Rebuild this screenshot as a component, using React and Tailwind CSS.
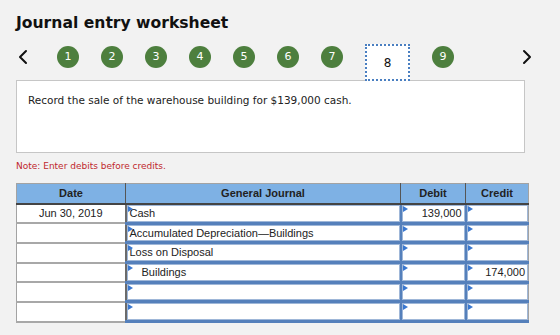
import React from "react";

const steps = [1, 2, 3, 4, 5, 6, 7, 8, 9];

const rows = [
  { date: "Jun 30, 2019", account: "Cash", debit: "139,000", credit: "" },
  { date: "", account: "Accumulated Depreciation\u2014Buildings", debit: "", credit: "" },
  { date: "", account: "Loss on Disposal", debit: "", credit: "" },
  { date: "", account: "Buildings", debit: "", credit: "174,000", indent: true },
  { date: "", account: "", debit: "", credit: "" },
  { date: "", account: "", debit: "", credit: "" },
];

const Chevron = ({ dir }) => (
  <svg width="10" height="16" viewBox="0 0 10 16" fill="none">
    <path
      d={dir === "left" ? "M8 2 L2 8 L8 14" : "M2 2 L8 8 L2 14"}
      stroke="#111"
      strokeWidth="2"
      strokeLinecap="round"
      strokeLinejoin="round"
    />
  </svg>
);

// input box with the little blue flag in the corner
const Cell = ({ children, align = "left", indent }) => (
  <div
    className={`relative h-[16.7px] bg-white border border-[#9fb7d8] flex items-center ${
      align === "right" ? "justify-end pr-[2px]" : indent ? "pl-[14px]" : "pl-[2px]"
    }`}
  >
    <span className="absolute left-0 top-0 w-0 h-0 border-t-[3px] border-b-[3px] border-l-[5px] border-t-transparent border-b-transparent border-l-[#3a78d0]" />
    {children}
  </div>
);

const App = () => {
  return (
    <div className="w-[560px] h-[335px] bg-[#f2f2f2] overflow-hidden font-['DejaVu_Sans',Verdana,sans-serif]">
      <h1 className="pl-4 pt-[13px] text-[15.6px] font-bold leading-[20px] text-[#111]">
        Journal entry worksheet
      </h1>

      <div className="flex items-start h-[37px] mt-[11px] pl-[18px] pr-[28px]">
        <div className="mt-[5px]">
          <Chevron dir="left" />
        </div>
        <div className="flex items-start gap-[22px] ml-[29px]">
          {steps.map((n) =>
            n === 8 ? (
              <div
                key={n}
                className="w-[45px] h-[37px] bg-white border-2 border-dotted border-[#4a7fc1] flex items-center justify-center text-[12px] text-[#111] relative z-10"
              >
                {n}
              </div>
            ) : (
              <div
                key={n}
                className="mt-[2px] w-[22px] h-[22px] rounded-full bg-[#4d7f3e] text-white text-[11px] flex items-center justify-center"
              >
                {n}
              </div>
            )
          )}
        </div>
        <div className="ml-auto mt-[5px]">
          <Chevron dir="right" />
        </div>
      </div>

      <div className="ml-4 w-[509px] h-[73px] -mt-px bg-white border border-[#c6c6c6] pl-[11px] pt-[12px] text-[10.5px] text-[#222]">
        Record the sale of the warehouse building for $139,000 cash.
      </div>

      <p className="pl-4 mt-[7px] text-[9px] text-[#c0272d]">Note: Enter debits before credits.</p>

      <table className="ml-4 mt-[9px] w-[512px] table-fixed border-collapse border border-[#a3a3a3] font-['Liberation_Sans',Arial,sans-serif] text-[11px] leading-[13px] text-[#222]">
        <colgroup>
          <col className="w-[109px]" />
          <col className="w-[275px]" />
          <col className="w-[65px]" />
          <col className="w-[63px]" />
        </colgroup>
        <thead>
          <tr className="h-[21px] bg-[#7eb1e4] font-bold">
            <th className="border-r border-r-[#555] border-b-2 border-b-[#444]">Date</th>
            <th className="border-r border-r-[#555] border-b-2 border-b-[#444]">General Journal</th>
            <th className="border-r border-r-[#555] border-b-2 border-b-[#444]">Debit</th>
            <th className="border-b-2 border-b-[#444]">Credit</th>
          </tr>
        </thead>
        <tbody>
          {rows.map((r, i) => (
            <tr key={i}>
              <td className="bg-white text-center border-r-2 border-r-[#6b6b6b] border-b-2 border-b-[#a8a8a8] p-0">
                {r.date}
              </td>
              <td className="p-0 border-b-[3px] border-b-[#5580bb]">
                <Cell indent={r.indent}>{r.account}</Cell>
              </td>
              <td className="p-0 border-l-2 border-l-[#5580bb] border-b-[3px] border-b-[#5580bb]">
                <Cell align="right">{r.debit}</Cell>
              </td>
              <td className="p-0 border-l-2 border-l-[#5580bb] border-b-[3px] border-b-[#5580bb]">
                <Cell align="right">{r.credit}</Cell>
              </td>
            </tr>
          ))}
        </tbody>
      </table>
    </div>
  );
};

export default App;
